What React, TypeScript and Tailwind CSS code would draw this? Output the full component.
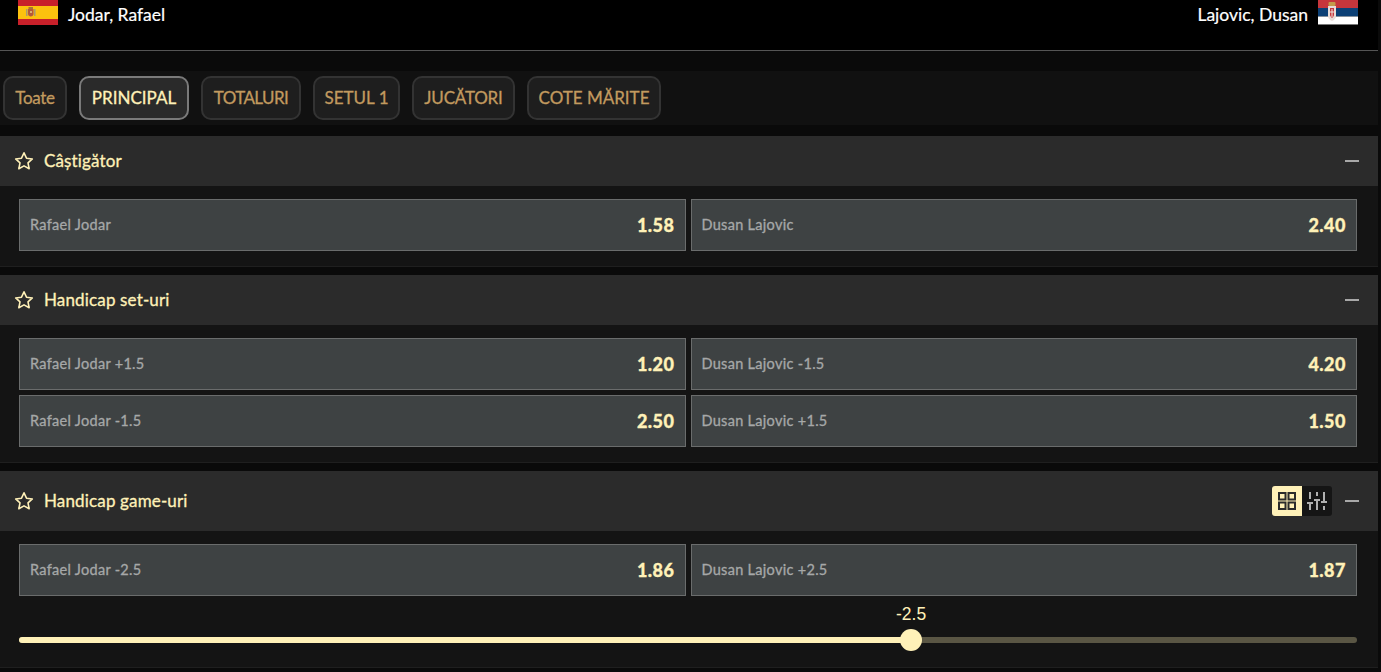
import React from "react";

const font = { fontFamily: '"Lato","Noto Sans",sans-serif' };

function Star() {
  return (
    <svg width="20" height="20" viewBox="0 0 24 24" fill="none" stroke="#fff1b8" strokeWidth="1.9" strokeLinejoin="round" className="shrink-0">
      <path d="M12 2.2l3 6.4 7 .9-5.2 4.8 1.4 7-6.2-3.5-6.2 3.5 1.4-7-5.2-4.8 7-.9z" />
    </svg>
  );
}

function Spain() {
  return (
    <svg width="40" height="25" viewBox="0 0 40 25" className="shrink-0">
      <rect width="40" height="25" fill="#c8202a" />
      <rect y="6" width="40" height="13" fill="#fcc10e" />
      <path d="M8 9h1.5v7H8zM16 9h1.5v7H16z" fill="#a89a70" />
      <path d="M10 9h5.5v5c0 1.500-1.300 2.500-2.750 2.500S10 15.500 10 14z" fill="#b5583a" />
      <path d="M10.500 7h4.500v2h-4.500z" fill="#a8703a" />
      <rect x="12" y="11" width="2" height="2" fill="#d8b070" />
    </svg>
  );
}

function Serbia() {
  return (
    <svg width="40" height="25" viewBox="0 0 40 25" className="shrink-0">
      <rect width="40" height="8" fill="#c6363c" />
      <rect y="8" width="40" height="8.5" fill="#0c4076" />
      <rect y="16.5" width="40" height="8.5" fill="#ffffff" />
      <rect y="24" width="40" height="1" fill="#777777" />
      <rect x="10.500" y="2" width="7" height="4" rx="1" fill="#c49a4a" />
      <path d="M10 6h8v10c0 2.500-2 4-4 5-2-1-4-2.500-4-5z" fill="#e8dcd8" />
      <path d="M12 8h4v7c0 1-1 2-2 3-1-1-2-2-2-3z" fill="#c6363c" />
      <path d="M13.500 9h1v8h-1zM12 11.500h4v1h-4z" fill="#f0e8e0" />
    </svg>
  );
}

function Odd({ label, odd }: { label: string; odd: string }) {
  return (
    <div className="flex-1 h-[52px] flex items-center justify-between bg-[#3e4243] border border-[#6a6c6c] px-[10px]">
      <span className="text-[14.500px] leading-[20px] tracking-[0.3px] text-[#a6a8a8] [-webkit-text-stroke:0.3px_#a6a8a8]">{label}</span>
      <span className="text-[18px] leading-[20px] tracking-[0.5px] font-black text-[#fff1b8] [-webkit-text-stroke:0.3px_#fff1b8]">{odd}</span>
    </div>
  );
}

function Section({ title, tall, tools, children }: { title: string; tall?: boolean; tools?: React.ReactNode; children: React.ReactNode }) {
  return (
    <section className="mr-[3px]">
      <div className={`flex items-center justify-between bg-[#2b2b2b] pl-[14px] pr-[19px] ${tall ? "h-[60px]" : "h-[50px]"}`}>
        <div className="flex items-center gap-[10px]">
          <Star />
          <span className="text-[17px] tracking-[0.15px] text-[#fff1b8] [-webkit-text-stroke:0.3px_#fff1b8]">{title}</span>
        </div>
        <div className="flex items-center gap-[13px]">
          {tools}
          <div className="w-[14px] h-[2px] bg-[#a8a8a8]" />
        </div>
      </div>
      <div className="bg-[#141414] border-b border-[#1f1f1f] pl-[19px] pr-[21px] pt-[13px] pb-[15px]">{children}</div>
    </section>
  );
}

function Row({ a, b, c, d }: { a: string; b: string; c: string; d: string }) {
  return (
    <div className="flex gap-[5px]">
      <Odd label={a} odd={b} />
      <Odd label={c} odd={d} />
    </div>
  );
}

const tabs = [
  { t: "Toate", w: "w-[64px] tracking-[-0.3px]" },
  { t: "PRINCIPAL", w: "w-[110px]" },
  { t: "TOTALURI", w: "w-[100px] tracking-[-0.6px]" },
  { t: "SETUL 1", w: "w-[87px]" },
  { t: "JUCĂTORI", w: "w-[103px] tracking-[-0.2px]" },
  { t: "COTE MĂRITE", w: "w-[134px]" },
];

export default function App() {
  return (
    <div style={font} className="w-[1381px] h-[672px] overflow-hidden bg-[#0a0a0a]">
      <header className="h-[51px] bg-black border-b border-[#555555] mr-[3px] flex justify-between pl-[18px] pr-[20px]">
        <div className="flex items-start gap-[10px]">
          <Spain />
          <span className="text-[17.500px] text-white leading-[30px] [-webkit-text-stroke:0.2px_#ffffff]">Jodar, Rafael</span>
        </div>
        <div className="flex items-start gap-[10px]">
          <span className="text-[17.500px] text-white leading-[30px] [-webkit-text-stroke:0.2px_#ffffff]">Lajovic, Dusan</span>
          <Serbia />
        </div>
      </header>
      <nav className="mt-[20px] h-[54px] bg-[#111111] mr-[3px] flex items-center gap-[12px] pl-[3px]">
        {tabs.map((x, i) => (
          <div
            key={x.t}
            className={`h-[44px] flex items-center justify-center rounded-[10px] border-2 text-[17px] ${x.w} ${
              i === 1
                ? "border-[#7a7a7a] text-[#fff1b8] bg-[#2a2a2a] [-webkit-text-stroke:0.3px_#fff1b8]"
                : "border-[#333333] text-[#c29a5f] bg-[#1e1e1e] [-webkit-text-stroke:0.3px_#c29a5f]"
            }`}
          >
            {x.t}
          </div>
        ))}
      </nav>
      <div className="mt-[11px] flex flex-col gap-[8px]">
        <Section title="Câștigător">
          <Row a="Rafael Jodar" b="1.58" c="Dusan Lajovic" d="2.40" />
        </Section>
        <Section title="Handicap set-uri">
          <div className="flex flex-col gap-[5px]">
            <Row a="Rafael Jodar +1.5" b="1.20" c="Dusan Lajovic -1.5" d="4.20" />
            <Row a="Rafael Jodar -1.5" b="2.50" c="Dusan Lajovic +1.5" d="1.50" />
          </div>
        </Section>
        <Section
          title="Handicap game-uri"
          tall
          tools={
            <div className="flex h-[30px] rounded-[3px] overflow-hidden">
              <div className="w-[30px] bg-[#fff1b8] flex items-center justify-center">
                <svg width="18" height="18" viewBox="0 0 18 18" fill="none" stroke="#2b2b2b" strokeWidth="2">
                  <rect x="1" y="1" width="6.500" height="6.500" />
                  <rect x="10.500" y="1" width="6.500" height="6.500" />
                  <rect x="1" y="10.500" width="6.500" height="6.500" />
                  <rect x="10.500" y="10.500" width="6.500" height="6.500" />
                </svg>
              </div>
              <div className="w-[30px] bg-[#151515] flex items-center justify-center">
                <svg width="20" height="20" viewBox="0 0 20 20" fill="none" stroke="#b0b0b0" strokeWidth="2">
                  <path d="M3 1v7M3 12v7M0 12h6M10 1v4M10 9v10M7 9h6M17 1v10M17 15v4M14 11h6" />
                </svg>
              </div>
            </div>
          }
        >
          <Row a="Rafael Jodar -2.5" b="1.86" c="Dusan Lajovic +2.5" d="1.87" />
          <div className="mt-[7px] ml-[877px] h-[17px] text-[17.500px] leading-[22px] text-[#fff1b8]" style={{ fontFamily: '"Liberation Sans",sans-serif' }}>
            -2.5
          </div>
          <div className="relative mt-[17px] mb-[9px] h-[6px] rounded-full bg-[#5a5644]">
            <div className="h-[6px] rounded-full bg-[#fff1b8] w-[892px]" />
            <div className="absolute left-[881px] top-[-8px] w-[22px] h-[22px] rounded-full bg-[#fff1b8]" />
          </div>
        </Section>
      </div>
    </div>
  );
}
